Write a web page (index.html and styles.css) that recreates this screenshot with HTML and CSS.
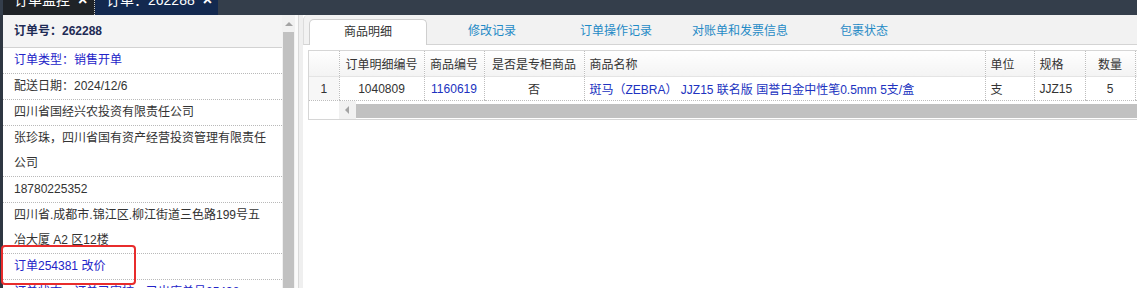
FILE: index.html
```html
<!DOCTYPE html>
<html lang="zh-CN">
<head>
    <meta charset="UTF-8">
    <meta name="viewport" content="width=device-width, initial-scale=1.0">
    <title>订单：262288</title>
    <link rel="stylesheet" href="styles.css">
</head>
<body>
    <div id="top-bar">
        <div class="top-tab dark"><span>订单监控</span><b>×</b></div>
        <div class="top-tab navy"><span>订单：262288</span><b>×</b></div>
    </div>

    <div id="main">
        <div class="side">
            <div class="side-list">
                <div class="side-head">订单号：262288</div>
                <div class="side-row blue">订单类型：销售开单</div>
                <div class="side-row">配送日期：2024/12/6</div>
                <div class="side-row">四川省国经兴农投资有限责任公司</div>
                <div class="side-row">张珍珠，四川省国有资产经营投资管理有限责任公司</div>
                <div class="side-row">18780225352</div>
                <div class="side-row">四川省.成都市.锦江区.柳江街道三色路199号五冶大厦 A2 区12楼</div>
                <div class="side-row blue">订单254381 改价</div>
                <div class="side-row blue">订单状态：订单已审核，已出库单号25438</div>
            </div>
            <div class="side-scroll">
                <div class="arrow-up"></div>
                <div class="thumb-v"></div>
            </div>
        </div>

        <div class="splitter"></div>

        <div class="content">
            <div class="tabs">
                <div class="tab active">商品明细</div>
                <div class="tab">修改记录</div>
                <div class="tab">订单操作记录</div>
                <div class="tab">对账单和发票信息</div>
                <div class="tab">包裹状态</div>
            </div>

            <div class="grid-wrap">
                <table class="grid">
                    <colgroup>
                        <col style="width: 30px">
                        <col style="width: 85px">
                        <col style="width: 60px">
                        <col style="width: 100px">
                        <col style="width: 401px">
                        <col style="width: 49px">
                        <col style="width: 51px">
                        <col style="width: 50px">
                        <col style="width: 100px">
                    </colgroup>
                    <thead>
                        <tr>
                            <th class="num"></th>
                            <th>订单明细编号</th>
                            <th>商品编号</th>
                            <th>是否是专柜商品</th>
                            <th class="left">商品名称</th>
                            <th class="left">单位</th>
                            <th class="left">规格</th>
                            <th>数量</th>
                            <th>单价</th>
                        </tr>
                    </thead>
                    <tbody>
                        <tr>
                            <td class="num">1</td>
                            <td>1040809</td>
                            <td class="link">1160619</td>
                            <td>否</td>
                            <td class="left link">斑马（ZEBRA） JJZ15 联名版 国誉白金中性笔0.5mm 5支/盒</td>
                            <td class="left">支</td>
                            <td class="left">JJZ15</td>
                            <td>5</td>
                            <td>6.50</td>
                        </tr>
                    </tbody>
                </table>
                <div class="hscroll">
                    <div class="hs-blank"></div>
                    <div class="arrow-left"></div>
                    <div class="thumb-h"></div>
                </div>
            </div>
        </div>
    </div>

    <div class="mark"></div>
</body>
</html>
```

FILE: styles.css
```css
body {
    margin: 0;
    height: 288px;
    overflow: hidden;
    background-color: #2f3742;
    font-family: "Liberation Sans", "Noto Sans CJK SC", sans-serif;
    font-size: 12px;
    color: #333;
}

#top-bar {
    height: 15px;
    overflow: hidden;
    background-color: #343e4b;
    display: flex;
    padding-left: 3px;
}

.top-tab {
    height: 25px;
    margin-top: -10px;
    line-height: 20px;
    font-size: 14px;
    color: #fff;
    display: flex;
    gap: 8px;
    padding-left: 11px;
    box-sizing: border-box;
}

.top-tab b {
    font-size: 16px;
}

.top-tab.dark {
    width: 92px;
    background-color: #1f2327;
    border-right: 1px dotted #c8c8c8;
}

.top-tab.navy {
    width: 123px;
    background-color: #13294f;
}

#main {
    display: flex;
    height: 273px;
    padding-left: 3px;
}

/* left info panel */
.side {
    width: 292px;
    display: flex;
    background-color: #fff;
}

.side-list {
    width: 279px;
    overflow: hidden;
}

.side-head {
    height: 32px;
    line-height: 32px;
    padding-left: 11px;
    background-color: #f4f4f4;
    border-bottom: 1px solid #d2d2d2;
    font-weight: bold;
    color: #1e2b55;
}

.side-row {
    line-height: 25px;
    padding: 0 13px 0 11px;
    border-bottom: 1px dotted #b9b9b9;
}

.side-row.blue {
    color: #2323c8;
}

.side-scroll {
    width: 13px;
    background-color: #f1f1f1;
    display: flex;
    flex-direction: column;
}

.arrow-up {
    height: 17px;
    position: relative;
}

.arrow-up::after {
    content: "";
    position: absolute;
    left: 3px;
    top: 7px;
    border-left: 4px solid transparent;
    border-right: 4px solid transparent;
    border-bottom: 4px solid #a3a3a3;
}

.thumb-v {
    flex: 1;
    margin: 0 1px;
    background-color: #c1c1c1;
}

.splitter {
    width: 8px;
    background: linear-gradient(to right, #fafafa 0 3px, #d9d9d9 3px 4px, #efefef 4px);
}

/* right content */
.content {
    flex: 1;
    overflow: hidden;
    background-color: #fff;
}

.tabs {
    height: 29px;
    display: flex;
    align-items: flex-end;
    gap: 6px;
    padding-left: 5px;
    background-color: #f2f2f2;
    border-left: 1px solid #dcdcdc;
    border-bottom: 1px solid #d4d4d4;
    border-top-left-radius: 5px;
}

.tab {
    width: 118px;
    height: 25px;
    line-height: 25px;
    text-align: center;
    color: #1f8ac6;
    box-sizing: border-box;
}

.tab.active {
    height: 26px;
    margin-bottom: -1px;
    background-color: #fff;
    border: 1px solid #cfcfcf;
    border-bottom: none;
    border-radius: 5px 5px 0 0;
    color: #333;
}

.grid-wrap {
    margin: 5px 0 0 5px;
    width: 960px;
    border: 1px solid #d6d6d6;
    border-right: none;
}

.grid {
    table-layout: fixed;
    border-collapse: collapse;
    width: 926px;
}

.grid th,
.grid td {
    padding: 0 5px;
    text-align: center;
    white-space: nowrap;
    overflow: hidden;
    border-left: 1px dotted #bdbdbd;
    font-weight: normal;
}

.grid th:first-child,
.grid td:first-child {
    border-left: none;
}

.grid th {
    height: 25px;
    background: linear-gradient(#ffffff, #f3f3f3);
    border-bottom: 1px solid #e4e4e4;
}

.grid td {
    height: 23px;
    border-bottom: 1px dotted #bdbdbd;
}

.grid .left {
    text-align: left;
}

.grid .link {
    color: #2032c0;
}

.grid td.num {
    background-color: #f7f7f7;
}

.hscroll {
    height: 18px;
    display: flex;
}

.hs-blank {
    width: 30px;
}

.arrow-left {
    width: 17px;
    background-color: #f1f1f1;
    position: relative;
}

.arrow-left::after {
    content: "";
    position: absolute;
    left: 6px;
    top: 5px;
    border-top: 4px solid transparent;
    border-bottom: 4px solid transparent;
    border-right: 4px solid #a3a3a3;
}

.thumb-h {
    flex: 1;
    margin: 3px 0 1px;
    background-color: #c1c1c1;
}

/* red annotation box */
.mark {
    position: absolute;
    left: 1px;
    top: 245px;
    width: 131px;
    height: 36px;
    border: 2px solid #e82c2c;
    border-radius: 4px;
}
```
